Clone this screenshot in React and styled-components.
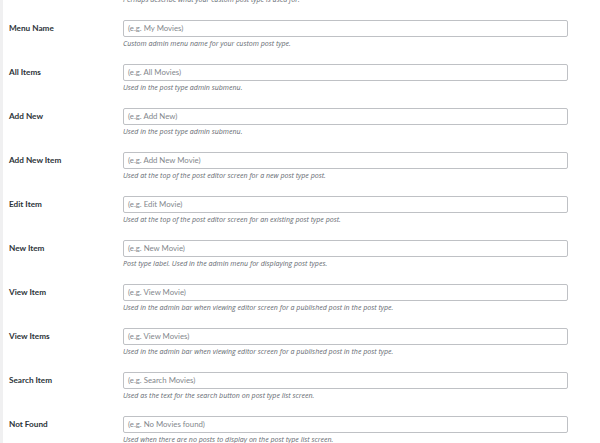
import React from "react";
import styled, { createGlobalStyle } from "styled-components";

const Global = createGlobalStyle`
  html, body { margin: 0; padding: 0; background: #fff; }
  body { font-family: "Open Sans", "Noto Sans", sans-serif; overflow: hidden; }
  * { box-sizing: border-box; }
`;

const Page = styled.div`
  width: 600px;
  height: 443px;
  overflow: hidden;
  background: #fff;
  border-left: 3px solid #f0f0f1;
`;

const Form = styled.div`
  margin-top: -5px;
  display: flex;
  flex-direction: column;
`;

const Row = styled.div`
  display: grid;
  grid-template-columns: 114px 445px;
  padding-left: 6px;
  padding-bottom: 16px;
`;

const Label = styled.div`
  font-family: "Lato", "Open Sans", sans-serif;
  font-size: 8.2px;
  font-weight: 700;
  color: #2c3338;
  line-height: 17px;
`;

const Field = styled.div`
  display: flex;
  flex-direction: column;
`;

const Input = styled.div`
  height: 17px;
  border: 1px solid #bfc1c5;
  border-radius: 2px;
  background: #fff;
  padding-left: 4px;
  font-family: "Lato", "Open Sans", sans-serif;
  font-size: 7.8px;
  line-height: 15px;
  color: #83878c;
`;

const Desc = styled.p`
  margin: 2px 0 0;
  font-size: 7.05px;
  line-height: 9px;
  font-style: italic;
  color: #646970;
  white-space: nowrap;
`;

const TopDesc = styled(Desc)`
  margin: 0;
`;

const rows = [
  ["Menu Name", "(e.g. My Movies)", "Custom admin menu name for your custom post type."],
  ["All Items", "(e.g. All Movies)", "Used in the post type admin submenu."],
  ["Add New", "(e.g. Add New)", "Used in the post type admin submenu."],
  ["Add New Item", "(e.g. Add New Movie)", "Used at the top of the post editor screen for a new post type post."],
  ["Edit Item", "(e.g. Edit Movie)", "Used at the top of the post editor screen for an existing post type post."],
  ["New Item", "(e.g. New Movie)", "Post type label. Used in the admin menu for displaying post types."],
  ["View Item", "(e.g. View Movie)", "Used in the admin bar when viewing editor screen for a published post in the post type."],
  ["View Items", "(e.g. View Movies)", "Used in the admin bar when viewing editor screen for a published post in the post type."],
  ["Search Item", "(e.g. Search Movies)", "Used as the text for the search button on post type list screen."],
  ["Not Found", "(e.g. No Movies found)", "Used when there are no posts to display on the post type list screen."],
];

export default function App() {
  return (
    <Page>
      <Global />
      <Form>
        <Row>
          <span />
          <Field>
            <TopDesc>Perhaps describe what your custom post type is used for.</TopDesc>
          </Field>
        </Row>
        {rows.map(([label, ph, desc]) => (
          <Row key={label}>
            <Label>{label}</Label>
            <Field>
              <Input>{ph}</Input>
              <Desc>{desc}</Desc>
            </Field>
          </Row>
        ))}
      </Form>
    </Page>
  );
}
